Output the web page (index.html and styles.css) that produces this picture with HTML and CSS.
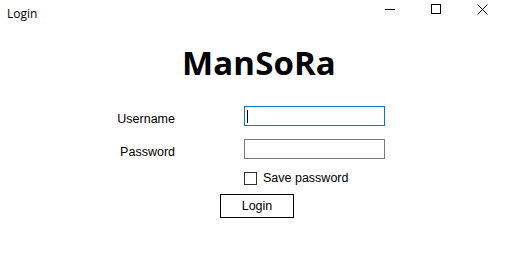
FILE: index.html
```html
<!DOCTYPE html>
<html>
<head>
<meta charset="utf-8">
<link rel="stylesheet" href="styles.css">
</head>
<body>
<div class="window">
  <div class="titlebar">
    <span class="wtitle">Login</span>
    <div class="controls">
      <span class="ctl"><svg width="10" height="10" viewBox="0 0 10 10"><line x1="0" y1="5.5" x2="10" y2="5.5" stroke="#000" stroke-width="1"/></svg></span>
      <span class="ctl"><svg width="10" height="10" viewBox="0 0 10 10"><rect x="0.5" y="0.5" width="9" height="9" fill="none" stroke="#000" stroke-width="1"/></svg></span>
      <span class="ctl"><svg width="11" height="11" viewBox="0 0 11 11"><path d="M0.5 0.5 L10.5 10.5 M10.5 0.5 L0.5 10.5" stroke="#000" stroke-width="1"/></svg></span>
    </div>
  </div>
  <div class="content">
    <h1 class="brand">ManSoRa</h1>
    <div class="form">
      <label class="lbl">Username</label>
      <div class="field focus"><span class="caret"></span></div>
      <label class="lbl">Password</label>
      <div class="field"></div>
      <span></span>
      <div class="check"><span class="box"></span><span class="ctext">Save password</span></div>
    </div>
    <div class="btnrow"><button class="btn">Login</button></div>
  </div>
</div>
</body>
</html>
```
FILE: styles.css
```css
html, body { margin: 0; padding: 0; background: #fff; }
body { width: 505px; height: 255px; overflow: hidden; font-family: "Liberation Sans", Arial, sans-serif; color: #000; }
.titlebar { height: 30px; display: flex; align-items: center; justify-content: space-between; }
.wtitle { font-family: "Open Sans", "Noto Sans", sans-serif; font-size: 12px; padding-left: 7px; margin-top: -3px; }
.controls { display: flex; height: 30px; }
.ctl { width: 46px; height: 30px; display: flex; align-items: center; justify-content: center; margin-top: -6px; }
.content { display: flex; flex-direction: column; }
.brand { margin: 12px 0 0 0; padding-left: 13px; text-align: center; font-family: "Open Sans", "Noto Sans", sans-serif; font-weight: 700; font-size: 33px; line-height: 42px; letter-spacing: 0.1px; }
.form { display: grid; grid-template-columns: 175px 141px; column-gap: 69px; row-gap: 13px; margin-top: 22px; align-items: center; }
.lbl { text-align: right; font-size: 12.5px; line-height: 13px; padding-top: 7px; height: 13px; align-self: start; }
.field { height: 18px; border: 1px solid #7a7a7a; background: #fff; position: relative; }
.field.focus { border-color: #0078d7; }
.caret { position: absolute; left: 2px; top: 3px; width: 1px; height: 13px; background: #000; }
.check { display: flex; align-items: center; margin-top: -1px; }
.box { width: 11px; height: 11px; border: 1px solid #333; }
.ctext { font-size: 12.5px; margin-left: 6px; }
.btnrow { padding-left: 220px; margin-top: 9px; }
.btn { width: 74px; height: 24px; border: 1px solid #000; background: #fff; font-family: "Liberation Sans", Arial, sans-serif; font-size: 12.5px; padding: 0; color: #000; }
```
